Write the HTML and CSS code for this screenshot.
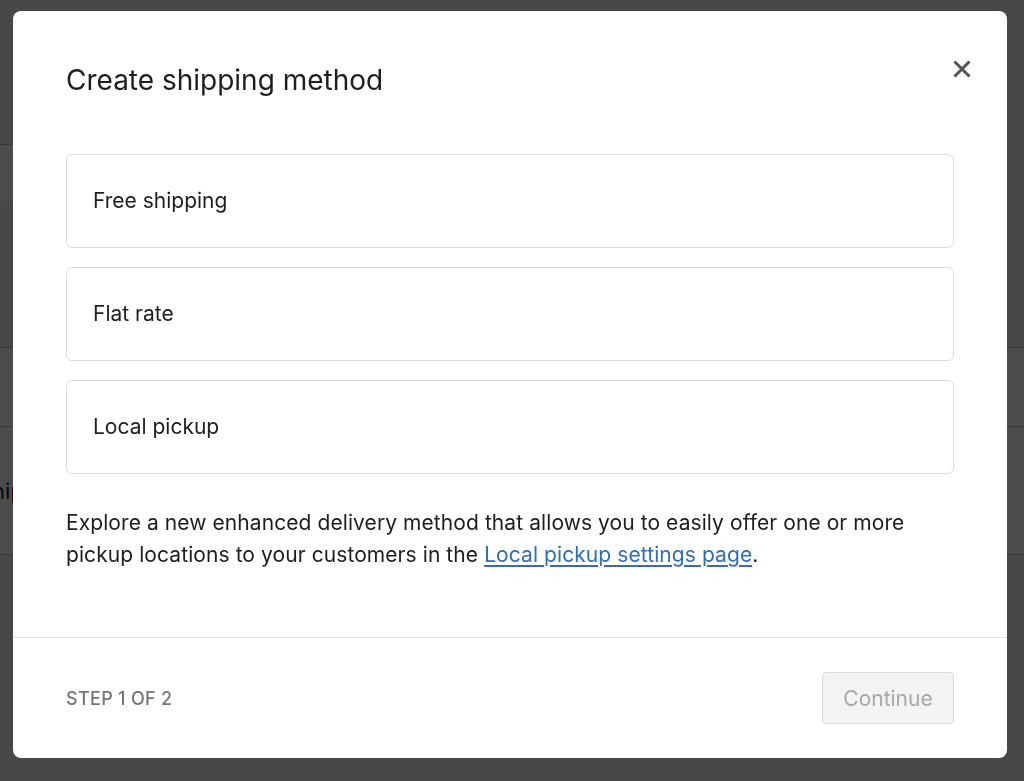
FILE: index.html
```html
<!DOCTYPE html>
<html lang="en">
<head>
  <meta charset="UTF-8">
  <title>Create shipping method</title>
  <link rel="stylesheet" href="styles.css">
</head>
<body>
  <div class="page">
    <div class="page-gap top"></div>
    <div class="page-tab"></div>
    <div class="page-gap mid"></div>
    <div class="page-row short"></div>
    <div class="page-row tall"><span class="row-text">Shipping</span></div>
  </div>

  <div class="overlay">
    <div class="modal">
      <div class="modal-header">
        <h1 class="modal-title">Create shipping method</h1>
        <button class="close" aria-label="Close">
          <svg width="20" height="20" viewBox="0 0 20 20">
            <path d="M2.5 2.5 L17.5 17.5 M17.5 2.5 L2.5 17.5" stroke="#555" stroke-width="3" fill="none"/>
          </svg>
        </button>
      </div>

      <div class="modal-body">
        <div class="options">
          <div class="option">Free shipping</div>
          <div class="option">Flat rate</div>
          <div class="option">Local pickup</div>
        </div>
        <p class="note">Explore a new enhanced delivery method that allows you to easily offer one or more pickup locations to your customers in the <a href="#">Local pickup settings page</a>.</p>
      </div>

      <div class="modal-footer">
        <span class="step">Step 1 of 2</span>
        <button class="continue" disabled>Continue</button>
      </div>
    </div>
  </div>
</body>
</html>
```

FILE: styles.css
```css
body {
  margin: 0;
  font-family: Inter, "Noto Sans", "Liberation Sans", sans-serif;
  color: #1e1e1e;
  background: #f0f0f1;
  overflow: hidden;
}
.page {
  height: 781px;
}
.page-gap.top { height: 144px; }
.page-gap.mid { height: 146px; }
.page-tab {
  width: 300px;
  height: 56px;
  background: #fff;
  border-top: 1px solid #c3c4c7;
}
.page-row {
  background: #fff;
  border-top: 1px solid #c3c4c7;
}
.page-row.short { height: 78px; }
.page-row.tall {
  height: 127px;
  border-bottom: 1px solid #c3c4c7;
  display: flex;
  align-items: center;
}
.row-text {
  font-size: 22px;
  margin-left: -22px;
}

.overlay {
  position: fixed;
  inset: 0;
  background: rgba(0, 0, 0, 0.7);
  padding: 11px 0 0 13px;
}
.modal {
  width: 994px;
  background: #fff;
  border-radius: 8px;
  overflow: hidden;
}
.modal-header {
  display: flex;
  justify-content: space-between;
  align-items: flex-start;
  padding: 51px 29px 0 53px;
}
.modal-title {
  margin: 0;
  font-size: 28px;
  line-height: 36px;
  font-weight: 400;
  color: #1e1e1e;
}
.close {
  border: 0;
  background: none;
  padding: 0;
  margin-top: -9px;
  width: 32px;
  height: 32px;
  display: flex;
  align-items: center;
  justify-content: center;
}

.modal-body {
  padding: 56px 53px 66px;
}
.options {
  display: flex;
  flex-direction: column;
  gap: 19px;
}
.option {
  border: 1px solid #dcdcde;
  border-radius: 6px;
  padding: 32px 26px;
  font-size: 21px;
  line-height: 28px;
}
.note {
  margin: 33px 0 0;
  font-size: 21px;
  line-height: 32px;
  letter-spacing: 0.08px;
}
.note a {
  color: #2f6fb5;
  text-decoration: underline;
  text-underline-offset: 3px;
}

.modal-footer {
  border-top: 1px solid #e0e0e0;
  display: flex;
  justify-content: space-between;
  align-items: center;
  padding: 34px 53px 34px;
}
.step {
  text-transform: uppercase;
  font-size: 18px;
  font-weight: 500;
  letter-spacing: 0.3px;
  color: #757575;
}
.continue {
  width: 132px;
  height: 52px;
  border: 1px solid #dcdcde;
  border-radius: 4px;
  background: #f3f3f3;
  color: #a7a7a7;
  font-family: inherit;
  font-size: 21px;
}
```
